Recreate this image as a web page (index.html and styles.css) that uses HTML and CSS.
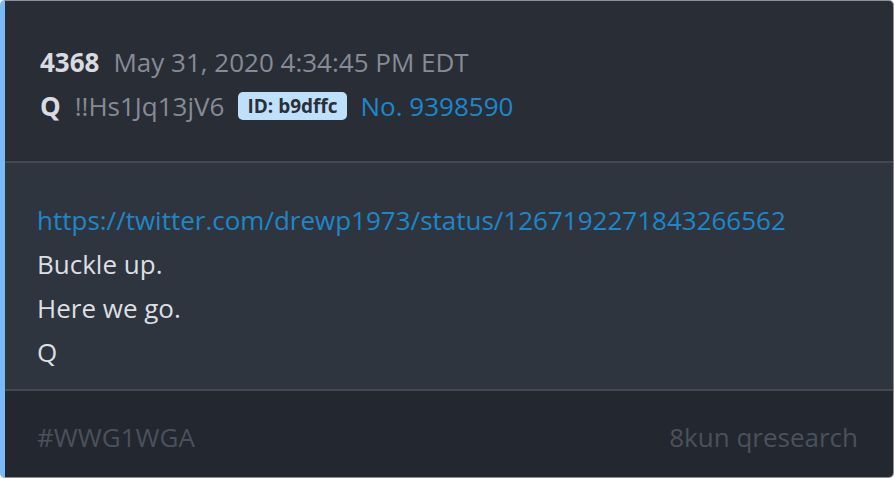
FILE: index.html
```html
<!DOCTYPE html>
<html>
	<head>
		<meta charset="UTF-8">
		<title>4368</title>
		<link rel="stylesheet" href="styles.css">
	</head>
	<body>
		<div class="post">
			<div class="post-head">
				<div class="line">
					<span class="num">4368</span>
					<span class="time">May 31, 2020 4:34:45 PM EDT</span>
				</div>
				<div class="line">
					<span class="name">Q</span>
					<span class="trip">!!Hs1Jq13jV6</span>
					<span class="uid">ID: b9dffc</span>
					<a class="no" href="#">No. 9398590</a>
				</div>
			</div>
			<div class="post-body">
				<p><a href="#">https://twitter.com/drewp1973/status/1267192271843266562</a></p>
				<p>Buckle up.</p>
				<p>Here we go.</p>
				<p>Q</p>
			</div>
			<div class="post-foot">
				<span>#WWG1WGA</span>
				<span>8kun qresearch</span>
			</div>
		</div>
	</body>
</html>
```
FILE: styles.css
```css
*{margin:0;padding:0;box-sizing:border-box;}
body{background:#fff;font-family:"Open Sans","Noto Sans",sans-serif;font-size:26px;}
a{text-decoration:none;}
.post{height:478px;display:flex;flex-direction:column;border:1px solid #8b9099;border-left:5px solid #7cb9f7;border-radius:5px;overflow:hidden;}
.post-head{background:#292d36;padding:39px 32px 33px 35px;border-bottom:2px solid #434852;}
.post-head .line{line-height:44px;display:flex;align-items:center;gap:14px;}
.num,.name{color:#d9dbe0;font-weight:bold;}
.time,.trip{color:#868b96;}
.uid{background:#bfe0fb;color:#2a2f38;font-weight:bold;font-size:19px;line-height:28px;padding:0 9px;border-radius:5px;}
.no{color:#1b88cc;}
.post-body{background:#2f353f;padding:35px 32px 13px 32px;border-bottom:2px solid #434852;flex:1;}
.post-body p{line-height:44px;color:#dcdfe4;}
.post-body a{color:#1d87c8;}
.post-foot{background:#23272f;padding:24px 35px 18px 32px;line-height:44px;display:flex;justify-content:space-between;color:#4b515c;}
```
